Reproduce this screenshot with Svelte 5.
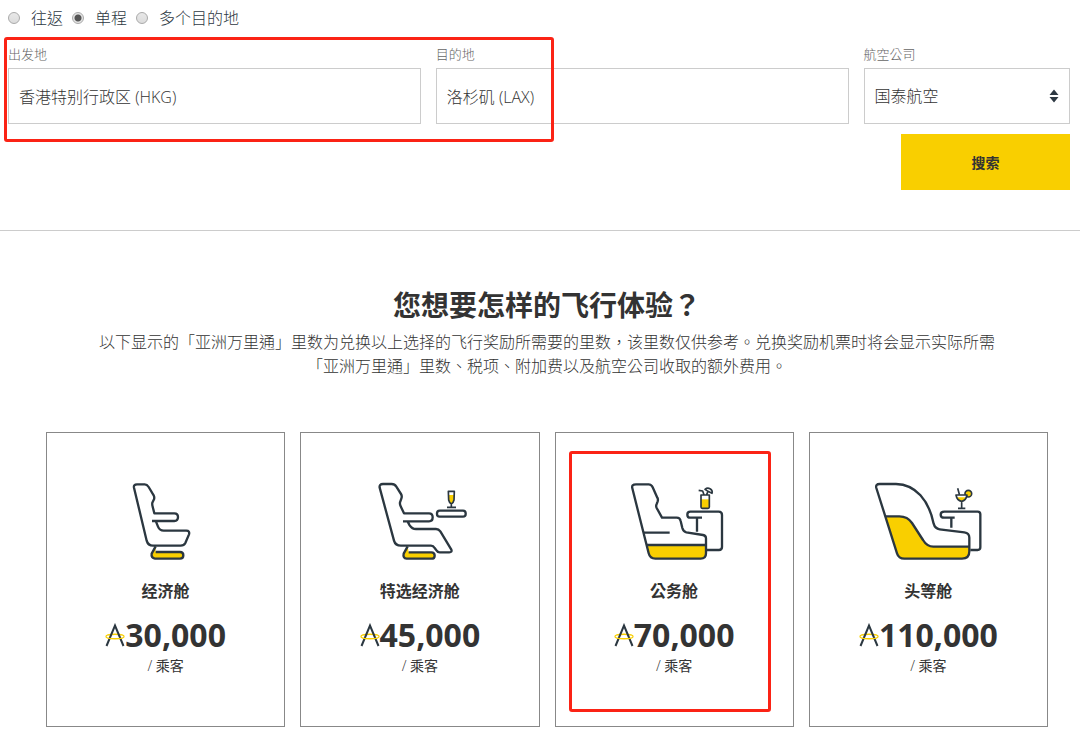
<script lang="ts">
  type CabinId = 'economy' | 'premium' | 'business' | 'first';

  interface Cabin {
    id: CabinId;
    name: string;
    miles: number;
    marked?: boolean;
  }

  const tripTypes = [
    { value: 'return', label: '往返' },
    { value: 'oneway', label: '单程' },
    { value: 'multi', label: '多个目的地' },
  ];

  const cabins: Cabin[] = [
    { id: 'economy', name: '经济舱', miles: 30000 },
    { id: 'premium', name: '特选经济舱', miles: 45000 },
    { id: 'business', name: '公务舱', miles: 70000, marked: true },
    { id: 'first', name: '头等舱', miles: 110000 },
  ];

  // each drawing has its own origin so that the seat sits centred in its card
  const viewBoxes: Record<CabinId, string> = {
    economy: '-40 33 360 240',
    premium: '-26 33 360 240',
    business: '-14 33 360 240',
    first: '11 33 360 240',
  };

  let tripType = $state('oneway');
  let origin = $state('香港特别行政区 (HKG)');
  let destination = $state('洛杉矶 (LAX)');
  let airline = $state('CX');
</script>

<form class="search" onsubmit={(e) => e.preventDefault()}>
  <div class="trip-types" role="radiogroup" aria-label="行程">
    {#each tripTypes as type}
      <label class="trip-type">
        <input type="radio" name="trip" value={type.value} bind:group={tripType} />
        {type.label}
      </label>
    {/each}
  </div>

  <div class="fields">
    <div class="field">
      <label for="origin">出发地</label>
      <input id="origin" type="text" bind:value={origin} />
    </div>
    <div class="field">
      <label for="destination">目的地</label>
      <input id="destination" type="text" bind:value={destination} />
    </div>
    <div class="field">
      <label for="airline">航空公司</label>
      <div class="select-wrap">
        <select id="airline" bind:value={airline}>
          <option value="CX">国泰航空</option>
        </select>
        <svg class="arrows" viewBox="0 0 10 14" aria-hidden="true">
          <path d="M5 0.5 L9.5 6 H0.5Z M5 13.5 L9.5 8 H0.5Z" />
        </svg>
      </div>
    </div>
  </div>

  <div class="actions">
    <button type="submit">搜索</button>
  </div>

  <span class="marker route-marker"></span>
</form>

<section class="experience">
  <h1>您想要怎样的飞行体验？</h1>
  <p class="intro">
    以下显示的「亚洲万里通」里数为兑换以上选择的飞行奖励所需要的里数，该里数仅供参考。兑换奖励机票时将会显示实际所需「亚洲万里通」里数、税项、附加费以及航空公司收取的额外费用。
  </p>

  <div class="cabins">
    {#each cabins as cabin (cabin.id)}
      <article class="cabin">
        <svg class="seat" viewBox={viewBoxes[cabin.id]} aria-hidden="true">
          {#if cabin.id === 'economy'}
            <path d="M110 155 L116 170 Q121 182 133 182 H201 Q212 182 209 193 L198 219 Q194 227 184 227 H101 Q86 227 82 212 L44 53 Q42 43 53 43 H76 Q83 43 88 51 L103 76 Q106 82 104 88 L99 98 Q98 104 100 110 L105 130 H165 Q176 130 176 141 Q176 153 165 153 H98" />
            <path class="gold" d="M109 246 H182 Q192 246 192 256 Q192 266 182 266 H107 Q95 264 97 251 L109 229" />
          {:else if cabin.id === 'premium'}
            <path d="M117 155 L123 166 Q130 177 142 177 H202 Q210 177 215 184 L248 239 Q251 247 242 247 H213 Q207 247 204 242 L198 234 Q194 227 187 227 H97 Q80 227 76 212 L33 53 Q31 42 43 42 H69 Q78 42 83 50 L97 72 Q101 78 98 86 L94 97 Q93 103 96 109 L106 130 H181 Q192 130 192 142 Q192 154 181 154 H103" />
            <path class="gold" d="M120 247 H188 Q198 247 198 257 Q198 266 188 266 H114 Q102 264 105 251 L117 229" />
            <rect x="205" y="122" width="86" height="18" rx="8" />
            <path class="fill-gold" d="M240 75 H256 L255 92 Q253 100 248 102 Q243 100 241 92Z" />
            <path class="thin" d="M239 64 H257 L256 90 Q254 99 248 102 Q242 99 240 90Z M248 102 V112 M235 112 H262" />
          {:else if cabin.id === 'business'}
            <path class="fill-gold" d="M84 225 H262 V250 Q262 266 246 266 H110 Q94 266 90 250Z" />
            <path d="M92 43 H52 Q38 43 41 55 L90 250 Q94 266 110 266 H246 Q262 266 262 250 V205 Q262 197 253 195 L203 187 Q194 185 191 174 L186 153 Q184 143 174 143 H130 L114 114 Q111 108 114 102 L117 94 Q119 88 116 83 L102 52 Q98 43 90 43" />
            <path d="M76 188 H153 M84 225 H262" />
            <path d="M235 185 V143 M250 143 H215 Q206 143 206 134 Q206 125 215 125 H300 Q310 125 310 135 V231 Q310 240 301 240 H264" />
            <path class="fill-gold" d="M247 88 H272 V115 H247Z" />
            <path class="thin" d="M247 75 H272 V111 Q272 115 268 115 H251 Q247 115 247 111Z M256 74 L252 63 L240 61 M264 74 L268 64" />
            <path class="thin" d="M259 58 Q266 52 274 56 Q283 61 280 70 L268 64Z" />
          {:else}
            <path class="fill-gold" d="M64 139 H105 Q130 139 143 159 L176 210 Q188 230 207 230 H315 V244 Q315 266 293 266 H120 Q103 266 98 250Z" />
            <path d="M95 42 H46 Q33 42 36 54 L98 250 Q103 266 120 266 H293 Q315 266 315 244 V203 Q315 189 300 187 L226 178 Q212 176 208 161 C194 92 154 43 95 42Z" />
            <path d="M64 139 H105 Q130 139 143 159 L176 210 Q188 230 207 230 H315" />
            <path d="M261 173 V143 M271 143 H240 Q229 143 229 134 Q229 125 240 125 H340 Q348 125 348 133 V232 Q348 240 340 240 H318" />
            <circle class="thin gold" cx="312" cy="71" r="10" />
            <path class="cup" d="M275 75 H308 Q305 92 292 94 Q278 92 275 75Z" />
            <path class="fill-gold" d="M279 82 H304 Q301 92 292 93 Q282 92 279 82Z" />
            <path class="thin" d="M275 75 H308 Q305 92 292 94 Q278 92 275 75Z M292 94 V115 M281 115 H303 M285 73 L280 55" />
          {/if}
        </svg>
        <h2>{cabin.name}</h2>
        <div class="miles">
          <svg class="miles-logo" viewBox="0 0 20 24" aria-hidden="true">
            <path class="ring" d="M1 13.5 C1 10.5 19 10.5 19 13.5" />
            <path class="peak" d="M1.5 23 L10 2.5 L18.5 23" />
            <path class="ring" d="M1 13.5 C1 16.5 19 16.5 19 13.5" />
          </svg>
          <strong>{cabin.miles.toLocaleString('en-US')}</strong>
        </div>
        <div class="unit">/ <span>乘客</span></div>
        {#if cabin.marked}
          <span class="marker cabin-marker"></span>
        {/if}
      </article>
    {/each}
  </div>
</section>

<style>
  :global(body) {
    background: #fff;
    color: #333;
    font-family: 'Open Sans', 'Noto Sans CJK TC', 'Noto Sans CJK SC', sans-serif;
    font-size: 16px;
    font-weight: 300;
  }

  .search {
    position: relative;
    padding: 6px 10px 40px 8px;
    border-bottom: 1px solid #ccc;
  }

  .trip-types {
    display: flex;
    gap: 9px;
    line-height: 24px;
    color: #2d3842;
  }

  .trip-type {
    display: flex;
    align-items: center;
    gap: 11px;
  }

  .trip-type input {
    appearance: none;
    box-sizing: border-box;
    width: 12px;
    height: 12px;
    margin: 0;
    border: 1px solid #aaa;
    border-radius: 50%;
    background: linear-gradient(#e8e8e8, #dcdcdc);
  }

  .trip-type input:checked {
    background: radial-gradient(circle, #555 0 3px, #e4e4e4 4px);
  }

  .fields {
    display: grid;
    grid-template-columns: 2fr 2fr 1fr;
    gap: 15px;
    margin-top: 14px;
  }

  .field label {
    display: block;
    margin-bottom: 4px;
    font-size: 13px;
    line-height: 20px;
    color: #666;
  }

  .field input,
  .field select {
    display: block;
    appearance: none;
    box-sizing: border-box;
    width: 100%;
    height: 56px;
    margin: 0;
    padding: 0 10px;
    border: 1px solid #ccc;
    border-radius: 0;
    background: #fff;
    font: inherit;
    color: #333;
  }

  .select-wrap {
    position: relative;
  }

  .arrows {
    position: absolute;
    top: 21px;
    right: 11px;
    width: 10px;
    height: 14px;
    fill: #2d3842;
    pointer-events: none;
  }

  .actions {
    display: flex;
    justify-content: flex-end;
    margin-top: 10px;
  }

  button {
    width: 169px;
    height: 56px;
    border: 0;
    background: #f9cf00;
    font: inherit;
    font-size: 14px;
    font-weight: 700;
    color: #333;
    cursor: pointer;
  }

  .marker {
    position: absolute;
    box-sizing: border-box;
    border: 3px solid #fb2315;
    border-radius: 3px;
    pointer-events: none;
  }

  .route-marker {
    top: 37px;
    left: 4px;
    width: 550px;
    height: 105px;
  }

  .experience {
    padding: 54px 32px 15px 46px;
    text-align: center;
  }

  h1 {
    margin: 0 0 5px;
    font-size: 28px;
    font-weight: 700;
    line-height: 40px;
  }

  .intro {
    max-width: 900px;
    margin: 0 auto 54px;
    line-height: 24px;
  }

  .cabins {
    display: grid;
    grid-template-columns: repeat(4, 1fr);
    gap: 15px;
  }

  .cabin {
    position: relative;
    padding: 48px 0 49px;
    border: 1px solid #888;
  }

  .seat {
    display: block;
    width: 120px;
    height: 80px;
    margin: 0 auto 18px;
    fill: none;
    stroke: #2b3740;
    stroke-width: 7;
    stroke-linejoin: round;
  }

  .seat .gold {
    fill: #f9cf00;
  }

  .seat .fill-gold {
    fill: #f9cf00;
    stroke: none;
  }

  .seat .cup {
    fill: #fff;
    stroke: none;
  }

  .seat .thin {
    stroke-width: 5;
  }

  h2 {
    margin: 0 0 12px;
    font-size: 16px;
    font-weight: 700;
    line-height: 24px;
  }

  .miles {
    display: flex;
    align-items: center;
    justify-content: center;
    font-size: 32px;
    line-height: 40px;
  }

  .miles strong {
    font-weight: 700;
  }

  .miles-logo {
    width: 20px;
    height: 24px;
    fill: none;
  }

  .peak {
    stroke: #2b3740;
    stroke-width: 2;
  }

  .ring {
    stroke: #f9cf00;
    stroke-width: 1.5;
  }

  .unit {
    font-size: 14px;
    line-height: 22px;
  }

  .unit span {
    font-weight: 400;
  }

  .cabin-marker {
    top: 18px;
    right: 22px;
    bottom: 14px;
    left: 13px;
  }
</style>
